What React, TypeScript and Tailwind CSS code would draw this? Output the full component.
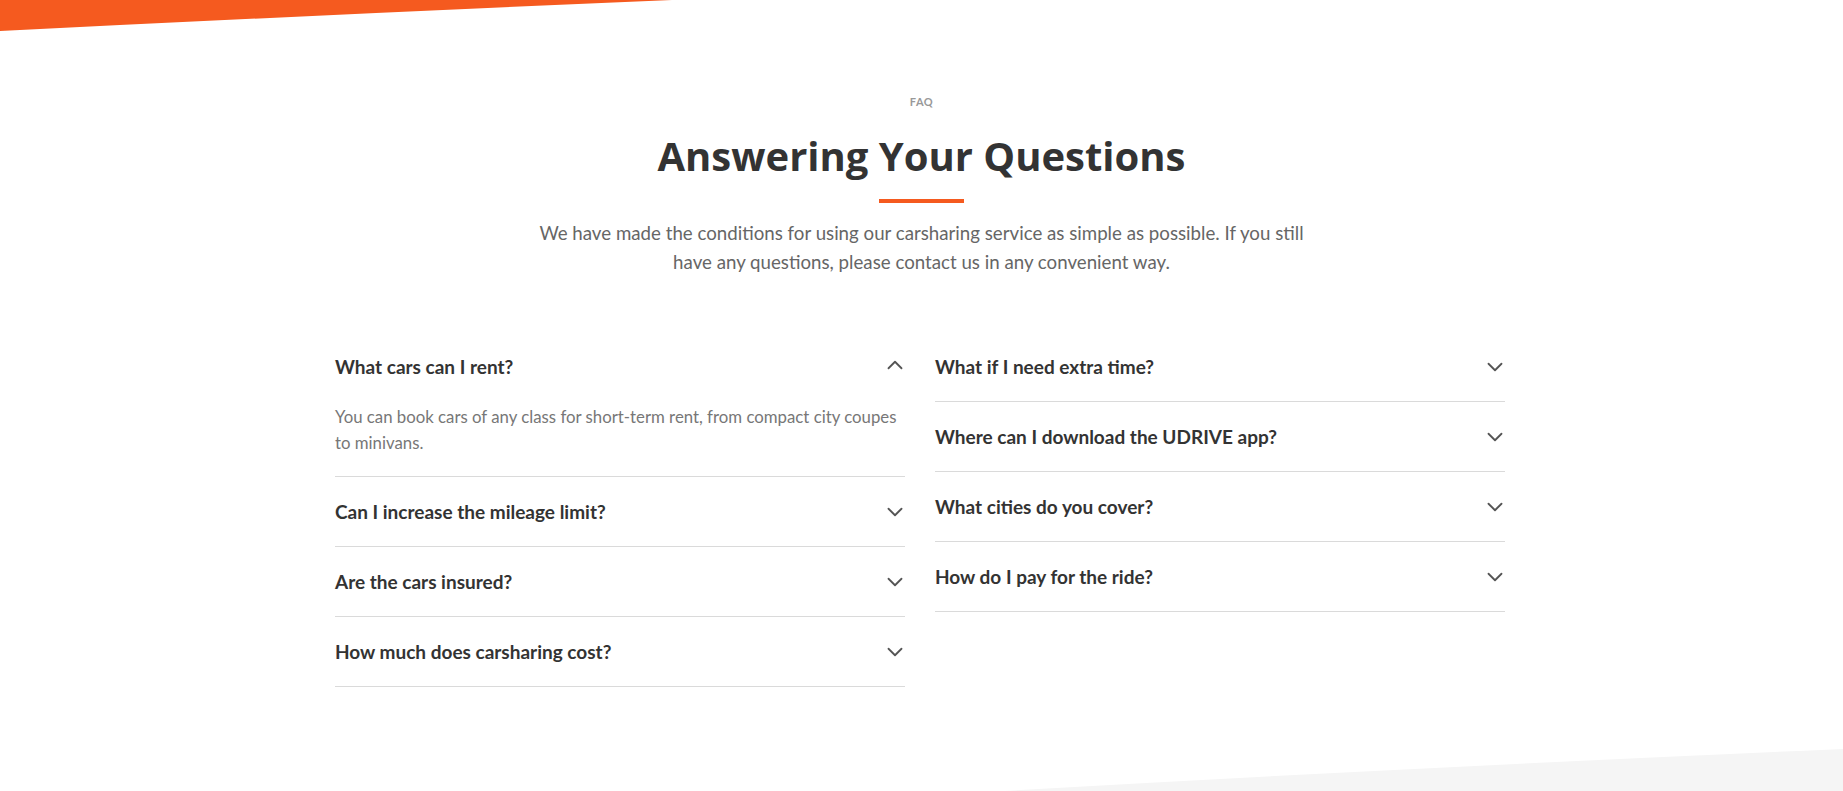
import { ChevronDown, ChevronUp } from "lucide-react";

type Faq = { q: string; a?: string; open?: boolean };

const left: Faq[] = [
  {
    q: "What cars can I rent?",
    a: "You can book cars of any class for short-term rent, from compact city coupes to minivans.",
    open: true,
  },
  { q: "Can I increase the mileage limit?" },
  { q: "Are the cars insured?" },
  { q: "How much does carsharing cost?" },
];

const right: Faq[] = [
  { q: "What if I need extra time?" },
  { q: "Where can I download the UDRIVE app?" },
  { q: "What cities do you cover?" },
  { q: "How do I pay for the ride?" },
];

function FaqItem({ item }: { item: Faq }) {
  return (
    <div className="border-b border-[#dadada]">
      <div className="flex items-center justify-between py-[23px]">
        <span className="text-[19px] leading-[23px] font-bold text-[#333]">{item.q}</span>
        {item.open ? (
          <ChevronUp className="w-[26px] h-[26px] -mr-[3px] -mt-[5px] -mb-[1px] text-[#555]" strokeWidth={1.7} />
        ) : (
          <ChevronDown className="w-[26px] h-[26px] -mr-[3px] -my-[2px] text-[#555]" strokeWidth={1.7} />
        )}
      </div>
      {item.open && item.a && (
        <p className="pt-[3px] pb-[20px] text-[16.8px] leading-[26px] text-[#777]">{item.a}</p>
      )}
    </div>
  );
}

export default function App() {
  return (
    <div className="relative w-full h-[791px] overflow-hidden bg-white" style={{ fontFamily: "Lato, 'Liberation Sans', sans-serif" }}>
      <svg className="absolute top-0 left-0" width="680" height="32" viewBox="0 0 680 32">
        <path d="M0 0 H672 Q340 14 0 31 Z" fill="#f55a1f" />
      </svg>
      <svg className="absolute bottom-0 right-0" width="840" height="42" viewBox="0 0 840 42">
        <path d="M0 42 Q420 18 840 0 V42 Z" fill="#f5f5f5" />
      </svg>

      <div className="relative flex flex-col items-center pt-[95px]">
        <div className="text-[11px] leading-[14px] font-bold tracking-[0.5px] text-[#999]">FAQ</div>
        <h2
          className="mt-[22px] text-[40px] leading-[50px] font-bold text-[#333]"
          style={{ fontFamily: "'Open Sans', 'Noto Sans', sans-serif" }}
        >
          Answering Your Questions
        </h2>
        <div className="mt-[18px] w-[85px] h-[4px] bg-[#f55a1f]" />
        <p className="mt-[16px] w-[790px] text-center text-[18.7px] leading-[29px] text-[#666]">
          We have made the conditions for using our carsharing service as simple as possible. If you still have any
          questions, please contact us in any convenient way.
        </p>

        <div className="mt-[55px] mr-[3px] w-[1170px] grid grid-cols-2 gap-x-[30px] items-start">
          <div>
            {left.map((f) => (
              <FaqItem key={f.q} item={f} />
            ))}
          </div>
          <div>
            {right.map((f) => (
              <FaqItem key={f.q} item={f} />
            ))}
          </div>
        </div>
      </div>
    </div>
  );
}
